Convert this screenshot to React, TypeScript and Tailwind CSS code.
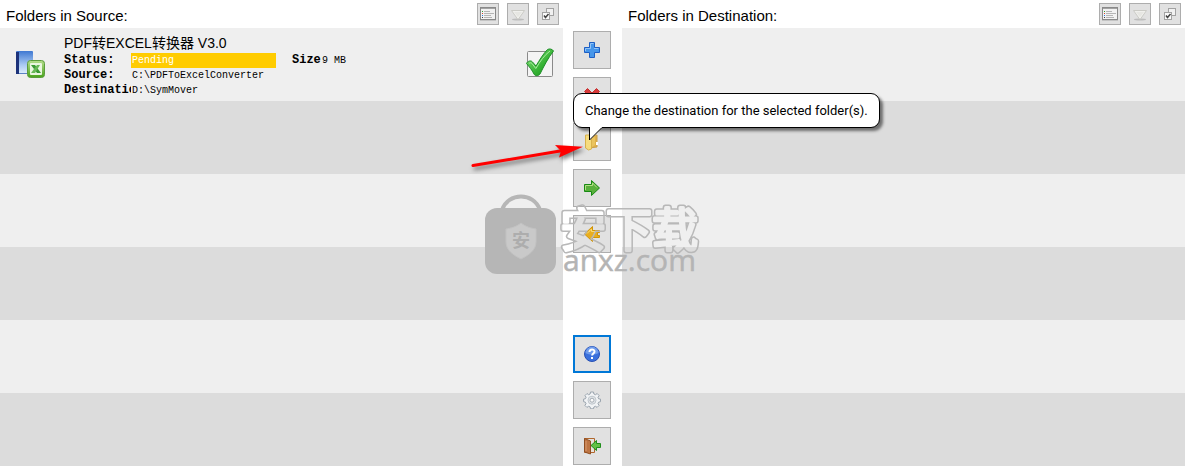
import type { ReactNode } from "react"

const STRIPES = [0, 1, 2, 3, 4, 5]

function ListIcon() {
  return (
    <svg width="16" height="14" viewBox="0 0 16 14" aria-hidden="true">
      <rect x="0.5" y="0.5" width="15" height="12" fill="#f2f2f2" stroke="#8a8a8a" />
      <path d="M1 1.5h14" stroke="#a3a3a3" />
      <path d="M4 4.5h6M4 6.5h10M4 8.5h7M4 10.5h8" stroke="#b5b5b5" />
      <path d="M2 4.5h1" stroke="#2f9e2f" />
      <path d="M2 6.5h1" stroke="#d0442c" />
      <path d="M2 8.5h1" stroke="#2c7be0" />
      <path d="M2 10.5h1" stroke="#444" />
      <path d="M0 13.5h16" stroke="#c4c4c4" />
    </svg>
  )
}

function FilterIcon() {
  return (
    <svg width="16" height="14" viewBox="0 0 16 14" aria-hidden="true">
      <ellipse cx="8" cy="12.5" rx="6" ry="1" fill="#bdbdbd" />
      <path d="M1.5 3.5h13L8.5 12h-1z" fill="#f0f0ed" stroke="#cbcbc6" />
      <path d="M4 5h8l-4 5z" fill="#e6e6e2" />
    </svg>
  )
}

function SelectAllIcon() {
  return (
    <svg width="14" height="14" viewBox="0 0 14 14" aria-hidden="true">
      <rect x="5.5" y="1.5" width="7" height="7" fill="#f1f1f1" stroke="#a2a2a2" />
      <rect x="1.5" y="5.5" width="7" height="7" fill="#fafafa" stroke="#a2a2a2" />
      <path d="M3 8.5l1.5 2L7.5 7" fill="none" stroke="#444" strokeWidth="1.5" />
    </svg>
  )
}

function AddIcon() {
  return (
    <svg width="18" height="18" viewBox="0 0 18 18" aria-hidden="true">
      <path
        d="M6.5 1.5h5v5h5v5h-5v5h-5v-5h-5v-5h5z"
        fill="#4696ea"
        stroke="#1d5fc4"
        strokeLinejoin="round"
      />
      <path d="M7.5 7.5v-5h3M2.5 10V7.5h5M11 7.5h4.5" fill="none" stroke="#93c4f7" />
    </svg>
  )
}

function RemoveIcon() {
  return (
    <svg width="18" height="18" viewBox="0 0 18 18" aria-hidden="true">
      <path
        d="M4.5 1.5L9 6l4.5-4.5 3 3L12 9l4.5 4.5-3 3L9 12l-4.5 4.5-3-3L6 9 1.5 4.5z"
        fill="#d83a3a"
        stroke="#c63030"
        strokeLinejoin="round"
      />
    </svg>
  )
}

function FolderIcon() {
  return (
    <svg width="16" height="18" viewBox="0 0 16 18" aria-hidden="true">
      <path d="M5 3l8-1v12l-8 1z" fill="#e0b04a" stroke="#c9a04b" />
      <path d="M1.5 2h4l2 2v12l-3 1-3-2z" fill="#f6dc7e" stroke="#d8b24c" />
      <path d="M8 5v9l3-2V4z" fill="#eac45e" />
      <rect x="12" y="9" width="2" height="3" fill="#fff" />
    </svg>
  )
}

function MoveRightIcon() {
  return (
    <svg width="18" height="18" viewBox="0 0 18 18" aria-hidden="true">
      <path
        d="M1.5 5.5h7v-4l8 7.5-8 7.5v-4h-7z"
        fill="#59b03c"
        stroke="#178a12"
        strokeLinejoin="round"
      />
      <path d="M2.5 11V6.5h7V4l4.5 4.5" fill="none" stroke="#b6dd85" />
    </svg>
  )
}

function MoveLeftIcon() {
  return (
    <svg width="18" height="18" viewBox="0 0 18 18" aria-hidden="true">
      <path
        d="M16.5 5.5H9.5v-4L1.5 9l8 7.5v-4h7v-2h-2v-3h2z"
        fill="#e9ae1f"
        stroke="#d29405"
        strokeLinejoin="round"
      />
      <path d="M4 8.5l4.5-4.5v2.5h6" fill="none" stroke="#f8da77" />
    </svg>
  )
}

function HelpIcon() {
  return (
    <svg width="18" height="18" viewBox="0 0 18 18" aria-hidden="true">
      <circle cx="9" cy="9" r="7.5" fill="#3a70dc" stroke="#2850b4" />
      <path d="M2.5 8a6.5 6.5 0 0 1 13 0c-4 2-9 2-13 0z" fill="#6f9cec" />
      <path
        d="M6.5 7c0-3.3 5-3.3 5-.5 0 2-2.4 1.9-2.4 4"
        fill="none"
        stroke="#fff"
        strokeWidth="2"
      />
      <rect x="8" y="12" width="2" height="2" fill="#fff" />
    </svg>
  )
}

function SettingsIcon() {
  return (
    <svg width="18" height="18" viewBox="0 0 18 18" aria-hidden="true">
      <path
        d="M7.5 1h3l.4 2 1.6.7L14.2 2.5l2 2.2-1.2 1.6.6 1.5 1.9.3v2.6l-1.9.5-.6 1.5 1.1 1.7-2 2-1.6-1.1-1.6.7-.4 1.8h-3l-.4-1.9-1.5-.6-1.7 1.1-2-2 1.1-1.7-.6-1.5L.6 10.7V8.1l1.9-.4.6-1.5L2 4.6l2-2.1 1.6 1.2L7.1 3z"
        fill="#f1f3f5"
        stroke="#9aa4ae"
      />
      <circle cx="9" cy="9.2" r="4" fill="#e3e6e9" stroke="#c0c7cd" />
      <circle cx="9" cy="9.2" r="2" fill="#fafafa" stroke="#a4acb4" />
    </svg>
  )
}

function ExitIcon() {
  return (
    <svg width="18" height="18" viewBox="0 0 18 18" aria-hidden="true">
      <path d="M1.5 1.5h10v14h-10z" fill="#e6e2dc" stroke="#b0672d" />
      <path d="M1.5 1.5l6 2.5v13l-6-2z" fill="#bd7544" stroke="#8f4e22" />
      <path d="M3 4v10" stroke="#d99b6e" />
      <path
        d="M17.5 6.5h-4v-3l-5.5 5 5.5 5v-3h4z"
        fill="#62c145"
        stroke="#1f8e1b"
        strokeLinejoin="round"
      />
    </svg>
  )
}

function ConverterIcon() {
  return (
    <svg width="32" height="32" viewBox="0 0 32 32" aria-hidden="true">
      <defs>
        <linearGradient id="book" x1="0" y1="0" x2="0" y2="1">
          <stop offset="0" stopColor="#3f78d2" />
          <stop offset="0.6" stopColor="#a9c9f2" />
          <stop offset="1" stopColor="#e0effd" />
        </linearGradient>
        <linearGradient id="sheet" x1="0" y1="0" x2="0" y2="1">
          <stop offset="0" stopColor="#b5dd8c" />
          <stop offset="1" stopColor="#49a31c" />
        </linearGradient>
      </defs>
      <rect x="2" y="2" width="17" height="23" rx="1" fill="url(#book)" />
      <path d="M2 3h3v22H2z" fill="#1c327a" />
      <path d="M5 24.5h10" stroke="#5b82c4" />
      <rect x="13.5" y="11.5" width="17" height="17" rx="3" fill="url(#sheet)" stroke="#5a9c3c" />
      <rect x="16" y="14" width="12" height="12" rx="1" fill="#eaf6e0" />
      <path d="M17 16h4l6 8h-4z" fill="#3a9a33" />
      <path d="M26 16h-3l-6 8h4z" fill="#68b957" />
    </svg>
  )
}

function CheckedIcon() {
  return (
    <svg width="30" height="30" viewBox="0 0 30 30" aria-hidden="true">
      <defs>
        <linearGradient id="tick" x1="0" y1="0" x2="1" y2="1">
          <stop offset="0" stopColor="#8be27f" />
          <stop offset="0.6" stopColor="#35b234" />
          <stop offset="1" stopColor="#168c1d" />
        </linearGradient>
      </defs>
      <rect x="2.5" y="3.5" width="25" height="25" rx="1" fill="#f4f4f4" stroke="#8a8a8a" />
      <path
        d="M1.5 15.5c1-2.5 4.5-3.5 6-1.5l3.5 4C14.5 12 18.5 5.5 22.5 1.5c2-1.2 5-.3 6 1.5C23 10 19 18 15 26c-1.5 2.2-5 2.2-6 0C7 22 4.5 19 1.5 15.5z"
        fill="url(#tick)"
        stroke="#1d8f27"
      />
      <path d="M4 15.5c1-1 2-1 3 0l3.8 5C15 13.5 19.5 7 25 3" fill="none" stroke="#a8ec9f" />
    </svg>
  )
}

function HeaderButton({ label, children }: { label: string; children: ReactNode }) {
  return (
    <button
      type="button"
      aria-label={label}
      className="flex size-[22px] items-center justify-center border border-[#adadad] bg-[#e1e1e1]"
    >
      {children}
    </button>
  )
}

function ToolButton({ label, active, children }: { label: string; active?: boolean; children: ReactNode }) {
  return (
    <button
      type="button"
      aria-label={label}
      className={`flex size-[38px] items-center justify-center bg-[#e1e1e1] ${
        active ? "border-2 border-[#0078d7]" : "border border-[#adadad]"
      }`}
    >
      {children}
    </button>
  )
}

function FolderRow() {
  return (
    <div className="flex items-start pt-[5px] pr-2 pl-[14px]">
      <div className="mt-4 w-[50px] shrink-0">
        <ConverterIcon />
      </div>
      <div className="min-w-0 flex-1">
        <h2 className="truncate text-[14px] leading-5 font-normal">PDF转EXCEL转换器 V3.0</h2>
        <dl className="grid grid-cols-[67px_145px_46px_1fr] font-['Liberation_Mono',monospace] text-[10px] leading-[15px] [&>dt]:overflow-hidden [&>dt]:text-[12px] [&>dt]:font-bold">
          <dt>Status:</dt>
          <dd className="bg-[#ffcc00] px-px text-white">Pending</dd>
          <dt className="pl-4">Size</dt>
          <dd>9 MB</dd>
          <dt>Source:</dt>
          <dd className="col-span-3 px-px">C:\PDFToExcelConverter</dd>
          <dt>Destination:</dt>
          <dd className="col-span-3 px-px">D:\SymMover</dd>
        </dl>
      </div>
      <label className="relative mt-[15px] shrink-0">
        <input type="checkbox" defaultChecked aria-label="Select folder" className="sr-only" />
        <CheckedIcon />
      </label>
    </div>
  )
}

function Panel({ title, children }: { title: string; children?: ReactNode }) {
  return (
    <section className="min-w-0">
      <header className="flex h-7 items-center justify-between pr-1 pl-1.5">
        <h1 className="pt-1 text-[15px] leading-5">{title}</h1>
        <div className="flex gap-2">
          <HeaderButton label="List view">
            <ListIcon />
          </HeaderButton>
          <HeaderButton label="Filter">
            <FilterIcon />
          </HeaderButton>
          <HeaderButton label="Select all">
            <SelectAllIcon />
          </HeaderButton>
        </div>
      </header>
      <ul>
        {STRIPES.map((i) => (
          <li key={i} className="h-[73px] odd:bg-[#efefef] even:bg-[#dcdcdc]">
            {i === 0 && children}
          </li>
        ))}
      </ul>
    </section>
  )
}

function Hint() {
  return (
    <div
      role="tooltip"
      className="absolute -top-[30px] left-0 z-20 rounded-[9px] border border-black bg-white px-[11px] py-2 font-['Roboto',sans-serif] text-[13px] leading-[17px] whitespace-nowrap shadow-[3px_3px_3px_rgba(0,0,0,0.5)]"
    >
      Change the destination for the selected folder(s).
      <svg className="absolute top-8 left-[14px]" width="18" height="16" viewBox="0 0 18 16" aria-hidden="true">
        <path d="M1.5 0v14.5L14 1.5V0z" fill="#fff" />
        <path d="M1.5 1v13L14 1.5" fill="none" stroke="#000" />
      </svg>
    </div>
  )
}

function Pointer() {
  return (
    <svg
      className="pointer-events-none absolute top-3 -left-[105px] z-30 drop-shadow-[2px_3px_2px_rgba(0,0,0,0.5)]"
      width="120"
      height="40"
      viewBox="0 0 120 40"
      aria-hidden="true"
    >
      <path d="M5 30.5L92 16" stroke="#f00" strokeWidth="3" strokeLinecap="round" />
      <path d="M87 10l28 1.7L91 22.5l2-6.5z" fill="#f00" />
    </svg>
  )
}

function Watermark() {
  return (
    <svg
      className="pointer-events-none absolute top-[190px] -left-[80px] z-10"
      width="218"
      height="90"
      viewBox="0 0 218 90"
      aria-hidden="true"
    >
      <defs>
        <mask id="hollow" maskUnits="userSpaceOnUse" x="0" y="0" width="218" height="90">
          <rect width="218" height="90" fill="#fff" />
          <text
            x="77"
            y="56"
            fontSize="46"
            fontFamily="Noto Sans CJK SC, sans-serif"
            fill="#000"
            stroke="#000"
            strokeWidth="3"
            strokeLinejoin="round"
          >
            安下载
          </text>
        </mask>
      </defs>
      <path d="M19 20C25 2 51 2 57 20" fill="none" stroke="#b6b6b6" strokeWidth="4" />
      <rect x="2" y="18" width="71" height="66" rx="12" fill="#b6b6b6" />
      <path d="M38 33c5 4 10 5 15 6v13c0 8-7 13-15 17-8-4-15-9-15-17V39c5-1 10-2 15-6z" fill="#c9c9c9" stroke="#c2c2c2" />
      <text x="29" y="57" fontSize="18" fontWeight="700" fontFamily="Noto Sans CJK SC, sans-serif" fill="#adadad">
        安
      </text>
      <text
        x="77"
        y="56"
        fontSize="46"
        fontFamily="Noto Sans CJK SC, sans-serif"
        fill="none"
        stroke="#b8b8b8"
        strokeWidth="6"
        strokeLinejoin="round"
        mask="url(#hollow)"
      >
        安下载
      </text>
      <text x="80" y="81" fontSize="30" fontFamily="Open Sans, sans-serif" fill="#b4b4b4" stroke="#b4b4b4" strokeWidth="0.5">
        anxz.com
      </text>
    </svg>
  )
}

export default function App() {
  return (
    <main className="grid grid-cols-[1fr_59px_1fr] overflow-hidden bg-white pr-px font-['Liberation_Sans','Noto_Sans_CJK_SC',sans-serif] text-black">
      <Panel title="Folders in Source:">
        <FolderRow />
      </Panel>

      {/* Transfer toolbar */}
      <div className="relative flex flex-col items-center justify-between pt-[31px] pr-px pb-px">
        <div className="flex flex-col gap-2">
          <ToolButton label="Add folder">
            <AddIcon />
          </ToolButton>
          <ToolButton label="Remove folder">
            <RemoveIcon />
          </ToolButton>
          <div className="relative">
            <ToolButton label="Change destination">
              <FolderIcon />
            </ToolButton>
            <Hint />
            <Pointer />
          </div>
          <ToolButton label="Move to destination">
            <MoveRightIcon />
          </ToolButton>
          <ToolButton label="Move back to source">
            <MoveLeftIcon />
          </ToolButton>
        </div>
        <div className="flex flex-col gap-2">
          <ToolButton label="Help" active>
            <HelpIcon />
          </ToolButton>
          <ToolButton label="Settings">
            <SettingsIcon />
          </ToolButton>
          <ToolButton label="Exit">
            <ExitIcon />
          </ToolButton>
        </div>
        <Watermark />
      </div>

      <Panel title="Folders in Destination:" />
    </main>
  )
}
